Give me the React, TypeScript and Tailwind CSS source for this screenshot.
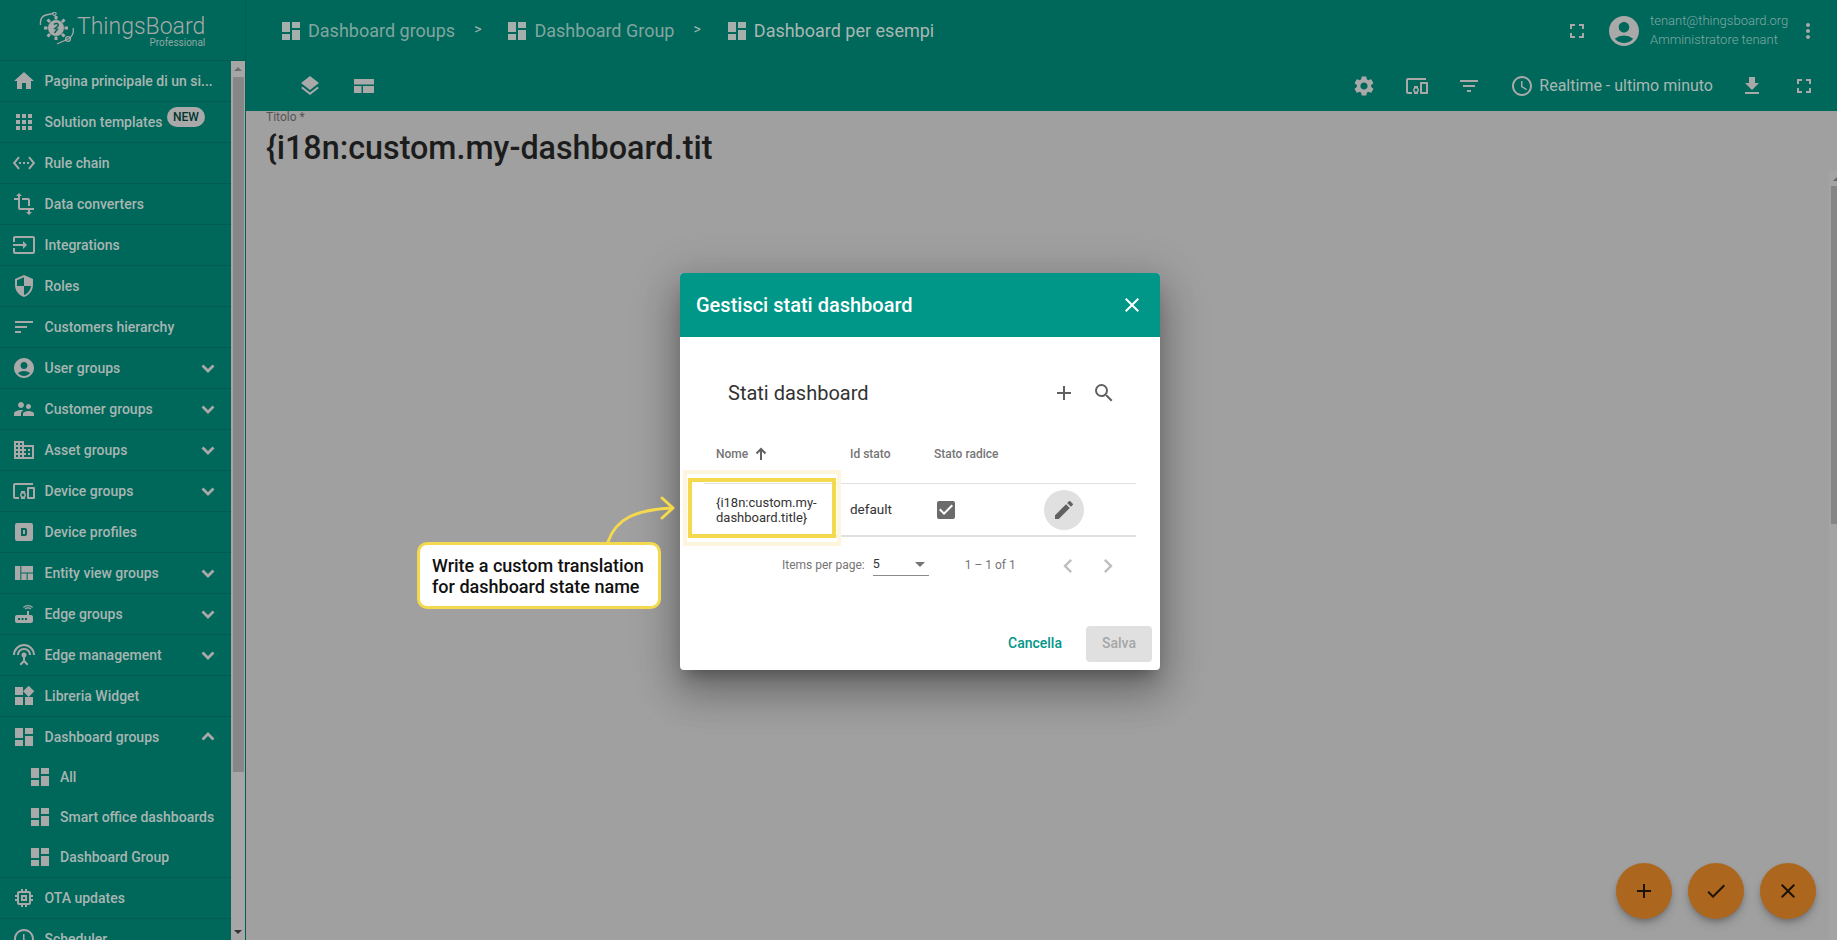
import type { ReactNode } from 'react';
import {
  MdHome, MdApps, MdSettingsEthernet, MdTransform, MdInput, MdSecurity, MdSort, MdAccountCircle,
  MdSupervisorAccount, MdDomain, MdDevicesOther, MdViewQuilt, MdRouter, MdSettingsInputAntenna,
  MdWidgets, MdDashboard, MdMemory, MdAccessTime, MdLayers, MdFullscreen,
  MdMoreVert, MdSettings, MdFilterList, MdFileDownload, MdClose, MdAdd, MdSearch,
  MdCheckBox, MdEdit, MdArrowDropDown, MdChevronLeft, MdChevronRight, MdCheck,
} from 'react-icons/md';

function DeviceProfileIcon({ className }: { className?: string }) {
  return (
    <svg viewBox="0 0 24 24" className={className} fill="currentColor">
      <path
        fillRule="evenodd"
        d="M5 3h14a2 2 0 0 1 2 2v14a2 2 0 0 1-2 2H5a2 2 0 0 1-2-2V5a2 2 0 0 1 2-2zM9 8v8h4a2 2 0 0 0 2-2v-4a2 2 0 0 0-2-2zM11 10h2v4h-2z"
      />
    </svg>
  );
}

function LayoutIcon() {
  return (
    <svg width="20" height="14" viewBox="0 0 20 14" fill="currentColor">
      <rect width="20" height="5.5" />
      <rect y="7" width="7.5" height="7" />
      <rect x="9" y="7" width="11" height="7" />
    </svg>
  );
}

function Logo() {
  return (
    <svg width="36" height="34" viewBox="0 0 36 34" fill="none" stroke="currentColor" className="text-[#a9a9a9]">
      <path d="M1.5 13C1 8 3 4 7 3l7-1.5" strokeWidth="1.3" />
      <circle cx="15.500" cy="1.800" r="1.600" strokeWidth="1.200" />
      <path d="M34 16c1 4-.5 8-4 10.500L18 32" strokeWidth="1.300" />
      <circle cx="29" cy="27" r="2.400" strokeWidth="1.300" />
      <circle cx="17" cy="16" r="8" fill="currentColor" stroke="none" />
      <path
        d="M17 4v24M5 16h24M8.500 7.500l17 17M25.500 7.500l-17 17"
        strokeWidth="3"
        strokeDasharray="3.500 17"
      />
      <path d="M15 12.500c2-2 5-1 4 1.500l-3 2.500 2.500.5-3 4" stroke="#00675b" strokeWidth="1.500" />
    </svg>
  );
}

function Chevron({ up }: { up?: boolean }) {
  return (
    <svg width="24" height="24" viewBox="0 0 24 24" fill="none" stroke="currentColor" strokeWidth="2.800" className="absolute left-[196px]">
      <path d={up ? 'M6.500 14.500l5.500-5.500 5.500 5.500' : 'M6.500 9.500l5.500 5.500 5.500-5.500'} />
    </svg>
  );
}

type NavItem = { label: string; icon: ReactNode; arrow?: 'down' | 'up'; badge?: boolean };

const iconCls = 'w-6 h-6 shrink-0';

const navItems: NavItem[] = [
  { label: 'Pagina principale di un si...', icon: <MdHome className={iconCls} /> },
  { label: 'Solution templates', icon: <MdApps className={iconCls} />, badge: true },
  { label: 'Rule chain', icon: <MdSettingsEthernet className={iconCls} /> },
  { label: 'Data converters', icon: <MdTransform className={iconCls} /> },
  { label: 'Integrations', icon: <MdInput className={iconCls} /> },
  { label: 'Roles', icon: <MdSecurity className={iconCls} /> },
  { label: 'Customers hierarchy', icon: <MdSort className={iconCls} /> },
  { label: 'User groups', icon: <MdAccountCircle className={iconCls} />, arrow: 'down' },
  { label: 'Customer groups', icon: <MdSupervisorAccount className={iconCls} />, arrow: 'down' },
  { label: 'Asset groups', icon: <MdDomain className={iconCls} />, arrow: 'down' },
  { label: 'Device groups', icon: <MdDevicesOther className={iconCls} />, arrow: 'down' },
  { label: 'Device profiles', icon: <DeviceProfileIcon className={iconCls} /> },
  { label: 'Entity view groups', icon: <MdViewQuilt className={iconCls} />, arrow: 'down' },
  { label: 'Edge groups', icon: <MdRouter className={iconCls} />, arrow: 'down' },
  { label: 'Edge management', icon: <MdSettingsInputAntenna className={iconCls} />, arrow: 'down' },
  { label: 'Libreria Widget', icon: <MdWidgets className={iconCls} /> },
];

function NavRow({ item }: { item: NavItem }) {
  return (
    <div className="relative flex items-center h-[41px] shrink-0 pl-3 border-b border-[#005c51] text-[#a9a9a9]">
      {item.icon}
      <span className="ml-[8.500px] text-sm font-medium whitespace-nowrap text-[#a8b6b2]">{item.label}</span>
      {item.badge && (
        <span className="absolute left-[167px] top-[5px] h-5 w-[38px] rounded-full bg-[#a9a9a9] text-[#00352e] text-xs font-medium flex items-center justify-center">
          NEW
        </span>
      )}
      {item.arrow === 'down' && <Chevron />}
      {item.arrow === 'up' && <Chevron up />}
    </div>
  );
}

function SubRow({ label }: { label: string }) {
  return (
    <div className="flex items-center h-10 shrink-0 pl-7 text-[#a9a9a9]">
      <MdDashboard className={iconCls} />
      <span className="ml-2 text-sm font-medium whitespace-nowrap text-[#a8b6b2]">{label}</span>
    </div>
  );
}

function Sidebar() {
  return (
    <div className="w-[246px] shrink-0 h-full flex flex-col bg-[#00675b] border-r border-[#005f54]">
      <div className="h-[61px] shrink-0 border-b border-[#005c51] flex items-start pl-[39px] pt-3">
        <Logo />
        <div className="ml-[2px] mt-[1px] flex flex-col items-end leading-none text-[#a9a9a9]">
          <span className="text-[23px] font-light leading-[28px]">ThingsBoard</span>
          <span className="text-[10px] leading-[10px] -mt-[3px] text-[#8fa8a3]">Professional</span>
        </div>
      </div>
      <div className="flex-1 min-h-0 flex">
        <div className="w-[231px] shrink-0 overflow-hidden flex flex-col">
          {navItems.map((item) => (
            <NavRow key={item.label} item={item} />
          ))}
          <div className="relative flex items-center h-10 shrink-0 pl-3 text-[#a9a9a9]">
            <MdDashboard className={iconCls} />
            <span className="ml-[8.500px] text-sm font-medium whitespace-nowrap text-[#a8b6b2]">Dashboard groups</span>
            <Chevron up />
          </div>
          <SubRow label="All" />
          <SubRow label="Smart office dashboards" />
          <SubRow label="Dashboard Group" />
          <div className="border-t border-[#005c51]">
            <NavRow item={{ label: 'OTA updates', icon: <MdMemory className={iconCls} /> }} />
          </div>
          <NavRow item={{ label: 'Scheduler', icon: <MdAccessTime className={iconCls} /> }} />
        </div>
        <div className="w-[14px] shrink-0 bg-[#a6a6a6] flex flex-col items-center">
          <div className="h-[16px] flex items-center">
            <div className="w-0 h-0 border-x-[4px] border-x-transparent border-b-[4px] border-b-[#6e6e6e]" />
          </div>
          <div className="w-[11px] h-[695px] bg-[#878787]" />
          <div className="flex-1" />
          <div className="h-[16px] flex items-center">
            <div className="w-0 h-0 border-x-[4px] border-x-transparent border-t-[4px] border-t-[#333333]" />
          </div>
        </div>
      </div>
    </div>
  );
}

function Crumb({ label, active }: { label: string; active?: boolean }) {
  return (
    <div className={`flex items-center ${active ? 'text-[#a9b7b3]' : 'text-[#80a69f]'}`}>
      <MdDashboard className="w-6 h-6 -mx-[1px] text-[#a5b0ad]" />
      <span className="ml-[6px] text-[18px] whitespace-nowrap">{label}</span>
    </div>
  );
}

function TopBar() {
  return (
    <div className="h-[111px] shrink-0 bg-[#00675b] text-[#a9a9a9] flex flex-col">
      <div className="h-[61px] shrink-0 flex items-center pl-[34px] relative">
        <Crumb label="Dashboard groups" />
        <span className="ml-[19px] mr-[25px] -mt-1 text-sm text-[#a9b7b3]">&gt;</span>
        <Crumb label="Dashboard Group" />
        <span className="ml-[19px] mr-[25px] -mt-1 text-sm text-[#a9b7b3]">&gt;</span>
        <Crumb label="Dashboard per esempi" active />
        <div className="flex-1" />
        <MdFullscreen className="w-6 h-6" />
        <MdAccountCircle className="w-9 h-9 ml-[17px]" />
        <div className="ml-[8px] w-[146px] -mt-[2px] flex flex-col text-[13px] font-light leading-[19px] text-[#7fa9a2]">
          <span className="whitespace-nowrap">tenant@thingsboard.org</span>
          <span className="whitespace-nowrap">Amministratore tenant</span>
        </div>
        <MdMoreVert className="w-6 h-6 mr-[17px]" />
      </div>
      <div className="flex-1 flex items-center pl-[52px] pr-[21px]">
        <MdLayers className="w-6 h-6" />
        <div className="ml-[32px]">
          <LayoutIcon />
        </div>
        <div className="flex-1" />
        <MdSettings className="w-6 h-6" />
        <MdDevicesOther className="w-6 h-6 ml-[29px]" />
        <MdFilterList className="w-6 h-6 ml-[28px]" />
        <MdAccessTime className="w-6 h-6 ml-[29px]" />
        <span className="ml-[5px] text-base text-[#a9b7b3] whitespace-nowrap">Realtime - ultimo minuto</span>
        <MdFileDownload className="w-6 h-6 ml-[27px]" />
        <MdFullscreen className="w-6 h-6 ml-[28px]" />
      </div>
    </div>
  );
}

function StatesDialog() {
  return (
    <div className="absolute left-[680px] top-[273px] w-[480px] h-[397px] bg-white rounded-[4px] overflow-hidden flex flex-col shadow-[0_11px_15px_-7px_rgba(0,0,0,0.3),0_24px_38px_3px_rgba(0,0,0,0.2),0_9px_46px_8px_rgba(0,0,0,0.16)]">
      <div className="h-16 shrink-0 bg-[#009688] text-white flex items-center pl-4 pr-4">
        <span className="text-xl font-medium flex-1 -mt-[1px]">Gestisci stati dashboard</span>
        <MdClose className="w-6 h-6" />
      </div>
      <div className="h-6 shrink-0" />
      <div className="h-16 shrink-0 flex items-center pl-12 text-[#333333]">
        <span className="text-xl flex-1">Stati dashboard</span>
        <div className="w-10 flex justify-center text-[#616161]">
          <MdAdd className="w-6 h-6" />
        </div>
        <div className="w-10 mr-9 flex justify-center text-[#616161]">
          <MdSearch className="w-6 h-6" />
        </div>
      </div>
      <div className="mx-6 flex flex-col">
        <div className="h-[59px] flex items-center pl-3 text-xs font-medium text-[#757575] border-b border-[#e0e0e0]">
          <div className="w-[134px] flex items-center">
            Nome
            <svg width="16" height="16" viewBox="0 0 16 16" fill="none" stroke="#616161" strokeWidth="2" className="ml-[5px]">
              <path d="M8 14V3M3.500 7.500L8 3l4.500 4.500" />
            </svg>
          </div>
          <div className="w-[83px]">Id stato</div>
          <div className="pl-[1px]">Stato radice</div>
        </div>
        <div className="h-[53px] flex items-center pl-3 text-[13.500px] text-[#333333] border-b-2 border-[#e0e0e0]">
          <div className="w-[134px] text-[13px] leading-[15px]">
            {'{i18n:custom.my-'}
            <br />
            {'dashboard.title}'}
          </div>
          <div className="w-[83px]">default</div>
          <div className="w-[111px] pl-[1px]">
            <MdCheckBox className="w-6 h-6 text-[#6b6b6b]" />
          </div>
          <div className="w-10 h-10 rounded-full bg-[#e0e0e0] flex items-center justify-center text-[#616161]">
            <MdEdit className="w-6 h-6" />
          </div>
        </div>
      </div>
      <div className="h-[56px] shrink-0 flex items-center pl-[102px] text-xs text-[#757575]">
        <span className="whitespace-nowrap">Items per page:</span>
        <div className="ml-2 w-14 h-6 border-b border-[#8a8a8a] flex items-center justify-between text-[#333333] text-[12.500px] -mt-[2px]">
          <span className="pt-[1px]">5</span>
          <MdArrowDropDown className="w-6 h-6 text-[#757575] -mr-[3px]" />
        </div>
        <span className="ml-9 whitespace-nowrap">1 – 1 of 1</span>
        <MdChevronLeft className="w-7 h-7 ml-[38px] mt-[2px] text-[#bdbdbd]" />
        <MdChevronRight className="w-7 h-7 ml-3 mt-[2px] text-[#bdbdbd]" />
      </div>
      <div className="flex-1 flex items-end justify-end pr-2 pb-2 gap-2">
        <div className="h-9 px-4 pb-[2px] flex items-center text-sm font-medium text-[#009688]">Cancella</div>
        <div className="h-9 w-[66px] pb-[2px] rounded-[4px] bg-[#e0e0e0] flex items-center justify-center text-sm font-medium text-[#a6a6a6]">
          Salva
        </div>
      </div>
    </div>
  );
}

function Annotation() {
  return (
    <>
      <div className="absolute left-[683px] top-[470px] w-[158px] h-[76px] border-4 border-[#fdf6dd]" />
      <div className="absolute left-[688px] top-[478px] w-[148px] h-[60px] border-4 border-[#f4d94f]" />
      <svg className="absolute left-[600px] top-[490px]" width="80" height="56" viewBox="0 0 80 56" fill="none" stroke="#f4d94f" strokeWidth="3" strokeLinecap="round">
        <path d="M8 52C16 28 36 20 72 18" />
        <path d="M62 8l11 10-11 10" strokeLinejoin="round" />
      </svg>
      <div className="absolute left-[417px] top-[542px] w-[244px] h-[67px] bg-white border-[3px] border-[#f4d94f] rounded-[10px] pl-[12px] flex flex-col justify-center text-lg font-medium leading-[21px] text-[#111111]">
        <span className="whitespace-nowrap">Write a custom translation</span>
        <span className="whitespace-nowrap">for dashboard state name</span>
      </div>
    </>
  );
}

function Fab({ children }: { children: ReactNode }) {
  return (
    <div className="w-14 h-14 rounded-full bg-[#ad661d] text-[#1c1206] flex items-center justify-center shadow-[0_3px_5px_-1px_rgba(0,0,0,0.2),0_6px_10px_0_rgba(0,0,0,0.14)]">
      {children}
    </div>
  );
}

export default function App() {
  return (
    <div className="relative w-[1837px] h-[940px] overflow-hidden flex font-['Roboto',sans-serif] bg-[#a0a0a0]">
      <Sidebar />
      <div className="flex-1 min-w-0 flex flex-col">
        <TopBar />
        <div className="h-[60px] shrink-0 pl-[20px]">
          <div className="text-xs leading-3 text-[#555555]">Titolo *</div>
          <div className="text-[32.300px] font-medium leading-[36px] mt-[7px] text-[#1c1c1c] whitespace-nowrap">
            {'{i18n:custom.my-dashboard.tit'}
          </div>
        </div>
        <div className="flex-1 flex justify-end">
          <div className="w-[8px] bg-[#a4a4a4] flex flex-col items-end">
            <div className="h-[15px] flex items-center">
              <div className="w-0 h-0 border-l-[4px] border-l-transparent border-b-[4px] border-b-[#666666]" />
            </div>
            <div className="w-[6px] h-[338px] bg-[#868686]" />
          </div>
        </div>
      </div>

      <StatesDialog />
      <Annotation />

      <div className="absolute left-[1616px] top-[863px] flex gap-4">
        <Fab>
          <MdAdd className="w-6 h-6" />
        </Fab>
        <Fab>
          <MdCheck className="w-6 h-6" />
        </Fab>
        <Fab>
          <MdClose className="w-6 h-6" />
        </Fab>
      </div>
    </div>
  );
}
